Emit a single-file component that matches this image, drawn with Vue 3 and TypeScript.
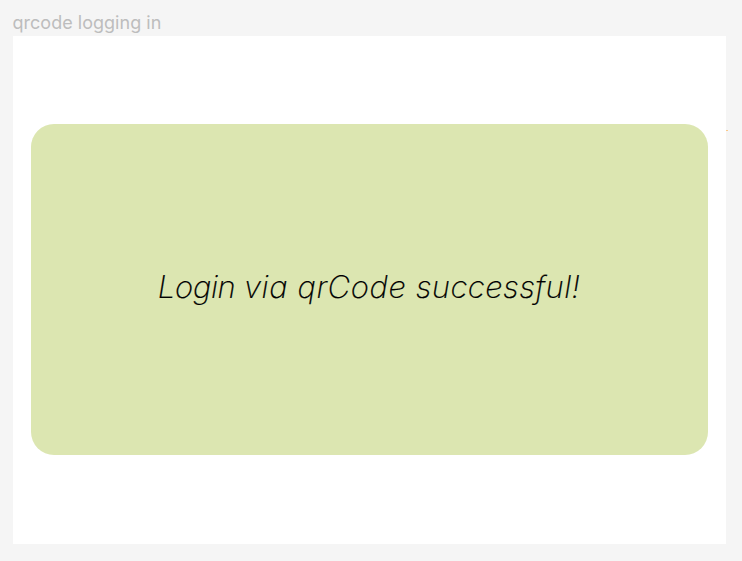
<script setup lang="ts">
const title: string = 'qrcode logging in'
</script>

<template>
  <main class="canvas">
    <div class="label">{{ title }}</div>
    <section class="frame">
      <div class="card">
        <p class="message">
          <span class="tight">Login </span><span class="wide">via </span><span class="wide">qrCode </span><span>successful!</span>
        </p>
      </div>
      <i class="speck"></i>
    </section>
  </main>
</template>

<style>
body {
  background: #f5f5f5;
}
</style>

<style scoped>
.canvas {
  box-sizing: border-box;
  height: 561px;
  padding: 10px 16px 17.6px 12.5px;
  background: #f5f5f5;
  display: flex;
  flex-direction: column;
  overflow: hidden;
}
.label {
  height: 26px;
  line-height: 26px;
  font-family: Inter, sans-serif;
  font-size: 18px;
  letter-spacing: 0.02px;
  color: #bdbdbd;
  white-space: nowrap;
}
.frame {
  position: relative;
  box-sizing: border-box;
  flex: 1;
  padding: 88.3px 18.5px;
  background: #fff;
}
.card {
  height: 331px;
  border-radius: 23px;
  background: #dce6b1;
  display: flex;
  align-items: center;
  justify-content: center;
}
.message {
  margin: 0;
  padding-bottom: 6px;
  font-family: Inter, sans-serif;
  font-feature-settings: 'cv11';
  font-weight: 200;
  font-style: italic;
  font-size: 31px;
  letter-spacing: 0.45px;
  line-height: 40px;
  color: #000;
  -webkit-text-stroke: 0.2px #000;
  white-space: nowrap;
}
.tight {
  letter-spacing: -0.3px;
}
.wide {
  letter-spacing: 0.6px;
}
.speck {
  position: absolute;
  right: -2px;
  top: 94px;
  width: 2px;
  height: 1px;
  background: #fbc98a;
}
</style>
